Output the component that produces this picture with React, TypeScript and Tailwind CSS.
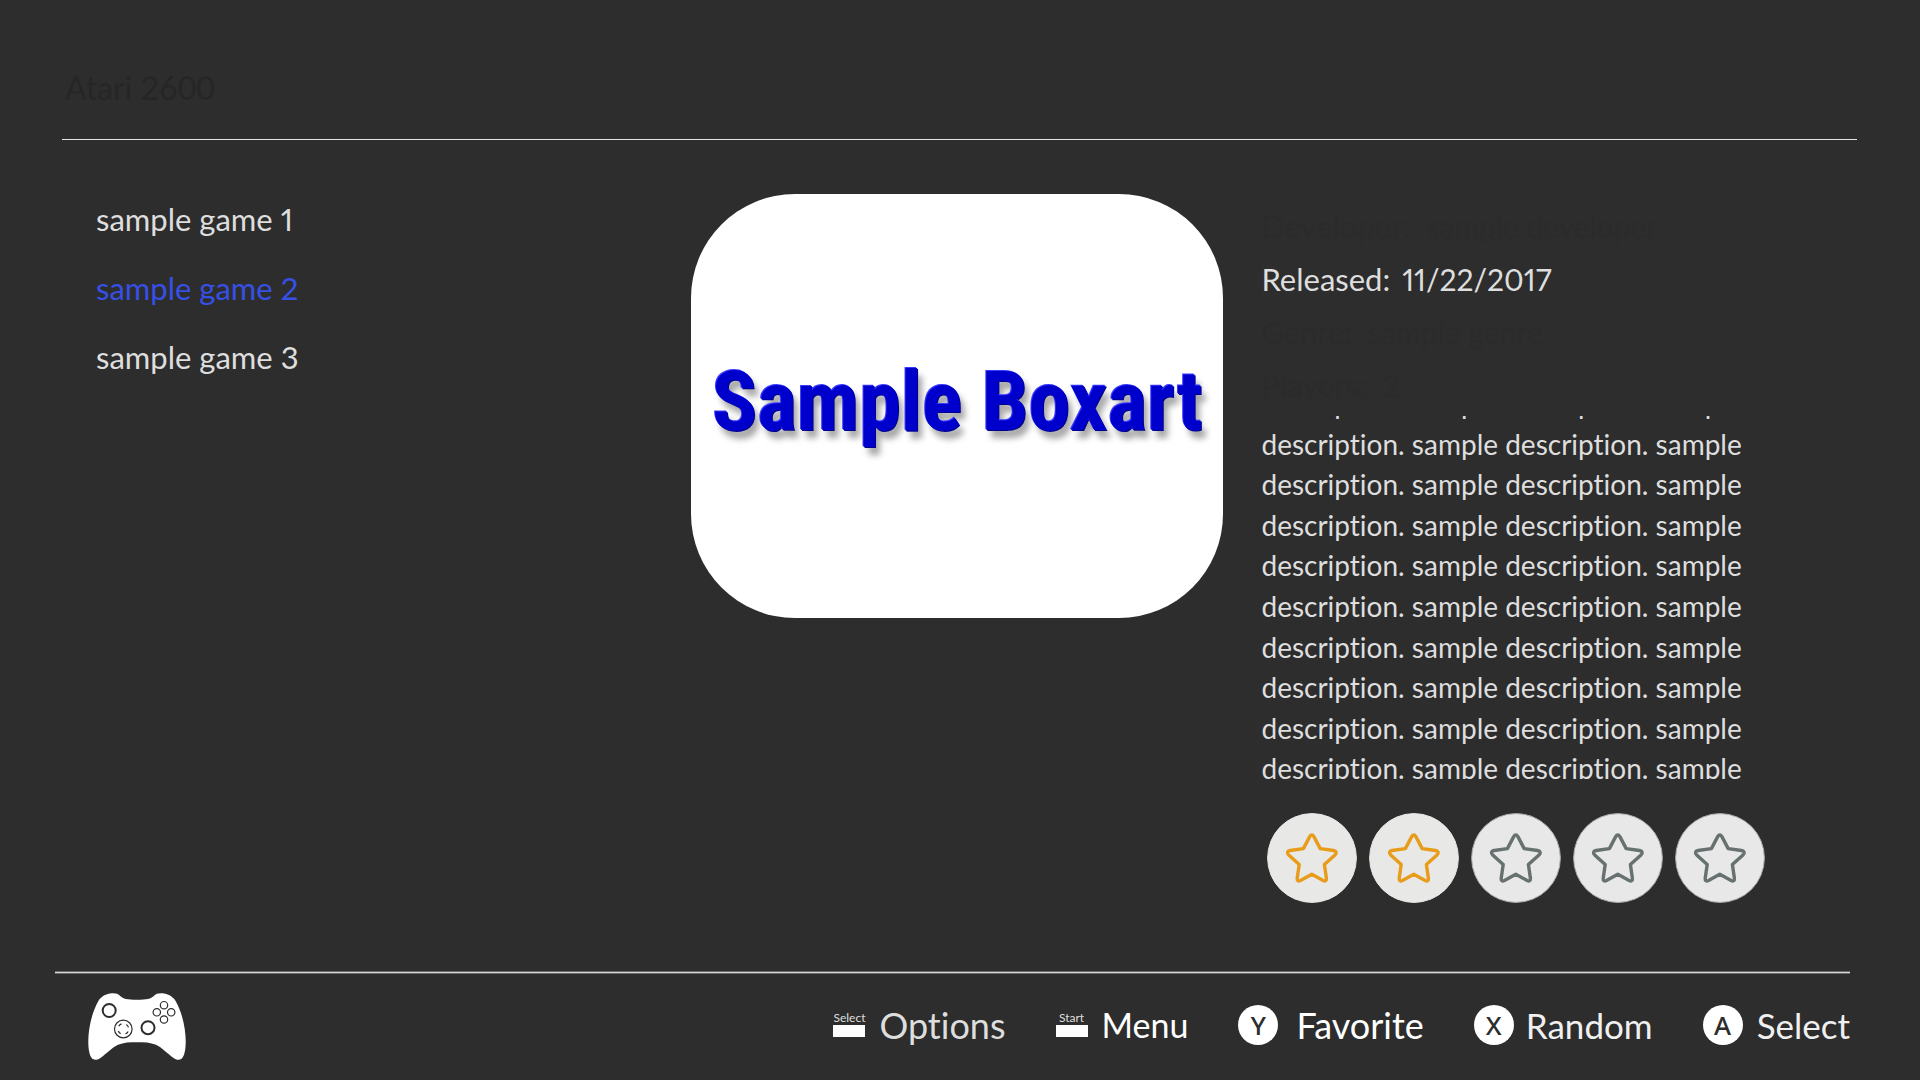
import React, { ReactNode } from "react";

const games = ["sample game 1", "sample game 2", "sample game 3"];
const selectedGame = 1;

const details = [
  { label: "Developer:", value: "sample developer", color: "text-[#2b2b2b]", gap: "gap-4" },
  { label: "Released:", value: "11/22/2017", color: "text-[#dedede]", gap: "gap-3" },
  { label: "Genre:", value: "sample genre", color: "text-[#2b2b2b]", gap: "gap-4" },
  { label: "Players:", value: "2", color: "text-[#2b2b2b]", gap: "gap-4" },
];

const description = "description. sample description. sample ".repeat(10).trim();

function Star({ filled, index }: { filled: boolean; index: number }) {
  return (
    <button type="button" aria-label={`Rate ${index} of 5`} aria-pressed={filled} className="size-[90px] shrink-0">
      <svg viewBox="0 0 90 90" className="size-full" fill="none">
        <circle
          cx="45"
          cy="45"
          r="44.4"
          fill={filled ? "#e8e8e6" : "#e8e8e8"}
          stroke={filled ? "#e8e8e6" : "#a9abab"}
          strokeWidth="1"
        />
        <path
          d="M42.7 23.6 Q44.8 20.4 46.9 23.6 L53.2 35.6 L66.5 37.5 Q71 38.6 68 42 L57.4 51.6 L59.4 65.3 Q59.6 69 56.1 67.5 L44.8 61.3 L33.5 67.5 Q30 69 30.2 65.3 L32.2 51.6 L21.7 42 Q18.7 38.6 23.1 37.5 L36.4 35.6 Z"
          stroke={filled ? "#e79c1c" : "#667170"}
          strokeWidth="3.4"
          strokeLinejoin="round"
        />
      </svg>
    </button>
  );
}

function Controller() {
  return (
    <svg viewBox="0 0 98 67" className="h-[67px] w-[98px]" role="img" aria-label="Controller">
      <path
        d="M24 .3 C28 .2 30 .8 32.5 3.2 C35 5.6 39 6.7 49 6.7 C59 6.7 63 5.6 65.5 3.2 C68 .8 70 .2 74 .3 C80 .8 85 3.4 87.6 8 C94 19 98 36 97.7 50 C97.6 56 96.6 63 93.6 65.8 C91 67.6 88 66.8 85.6 65 C79 60.5 74 54.5 68 51.8 C62.5 49.3 56 49.2 49 49.2 C42 49.2 35.5 49.3 30 51.8 C24 54.5 19 60.5 12.4 65 C10 66.8 7 67.6 4.4 65.8 C1.4 63 .4 56 .3 50 C0 36 4 19 10.4 8 C13 3.4 18 .8 24 .3 Z"
        fill="#fff"
      />
      <g fill="none" stroke="#2d2d2d">
        <circle cx="21.2" cy="17.5" r="6.5" strokeWidth="2" />
        <circle cx="60" cy="34.7" r="6.5" strokeWidth="2" />
        <circle cx="35.3" cy="36" r="8.8" strokeWidth="1.2" />
        <circle cx="35.3" cy="36" r="5.4" strokeWidth="1.2" strokeDasharray="3.4 5.08" strokeDashoffset="-2.54" />
        <circle cx="76" cy="12.2" r="3.7" strokeWidth="1.2" />
        <circle cx="76" cy="26.5" r="3.7" strokeWidth="1.2" />
        <circle cx="68.8" cy="19.3" r="3.7" strokeWidth="1.2" />
        <circle cx="83.2" cy="19.3" r="3.7" strokeWidth="1.2" />
      </g>
    </svg>
  );
}

function BarKey({ name }: { name: string }) {
  return (
    <span className="flex w-8 flex-col items-center text-[12px] leading-[12px] text-[#dedede]">
      {name}
      <span className="mt-px h-3 w-full bg-white" />
    </span>
  );
}

function RoundKey({ name }: { name: string }) {
  return (
    <span className="flex size-10 items-center justify-center rounded-full bg-white font-['Noto_Sans',sans-serif] text-[26px] leading-none font-medium text-[#2d2d2d]">
      {name}
    </span>
  );
}

function Action({ className, children }: { className: string; children: ReactNode }) {
  return (
    <button type="button" className={`flex items-center leading-[44px] ${className}`}>
      {children}
    </button>
  );
}

export default function App() {
  return (
    <div className="flex min-h-screen flex-col bg-[#2d2d2d] font-['Lato','Noto_Sans',sans-serif] text-[#dedede] [font-variant-ligatures:none]">
      <header className="mr-[63px] ml-[62px] border-b border-[#e4e6e5] pt-[68px] pb-[31px]">
        <h1 className="pl-[3px] text-[32px] leading-[40px] text-[#262626]">Atari 2600</h1>
      </header>

      <main className="grid grid-cols-[36%_1fr_34.3%]">
        <ul className="pt-[45px] pl-[96px] text-[31px] proportional-nums">
          {games.map((game, i) => (
            <li key={game}>
              <button
                type="button"
                className={`block leading-[69px] ${i === selectedGame ? "text-[#3650e6]" : "text-[#dedede]"}`}
              >
                {game}
              </button>
            </li>
          ))}
        </ul>

        <section className="pt-[54px] pr-[38px]">
          <div
            role="img"
            aria-label="Box art"
            className="flex h-[424px] items-center justify-center rounded-[104px] bg-white pb-2"
          >
            <span className="font-['Roboto_Condensed'] text-[84px] leading-[96px] font-bold whitespace-nowrap text-[#0000cd] [text-shadow:-1px_-1px_0_#3a3aff,1px_1px_0_#00008c,5px_8px_6px_rgba(0,0,0,0.35)]">
              Sample Boxart
            </span>
          </div>
        </section>

        <section className="pt-[60px]">
          <dl className="text-[30px] leading-[53px] proportional-nums">
            {details.map((d) => (
              <div key={d.label} className={`flex h-[53px] items-baseline ${d.gap} ${d.color}`}>
                <dt className="text-[31px]">{d.label}</dt>
                <dd>{d.value}</dd>
              </div>
            ))}
          </dl>
          <div className="mt-1 h-[363px] max-w-[520px] overflow-hidden">
            <p className="-mt-[33px] text-[28px] leading-[1.45]">{description}</p>
          </div>
          <div className="mt-[34px] ml-1.5 flex gap-3">
            {[1, 2, 3, 4, 5].map((n) => (
              <Star key={n} index={n} filled={n <= 2} />
            ))}
          </div>
        </section>
      </main>

      <footer className="mt-auto pb-5">
        <div className="mr-[70px] ml-[55px] h-[3px] border-y border-[#6a6a6a] bg-[#d8d8d8]" />
        <div className="mr-[70px] ml-[88px] flex items-center justify-between pt-[19px]">
          <Controller />
          <nav className="flex items-center gap-[50px] pb-1">
            <Action className="gap-[14px] text-[36px]">
              <BarKey name="Select" />
              Options
            </Action>
            <Action className="gap-[14px] text-[34px] text-white">
              <BarKey name="Start" />
              Menu
            </Action>
            <Action className="gap-[18px] text-[36px] text-white">
              <RoundKey name="Y" />
              Favorite
            </Action>
            <Action className="gap-3 text-[35px] text-[#f0f0f0]">
              <RoundKey name="X" />
              Random
            </Action>
            <Action className="gap-[14px] text-[35px] text-[#f0f0f0]">
              <RoundKey name="A" />
              Select
            </Action>
          </nav>
        </div>
      </footer>
    </div>
  );
}
